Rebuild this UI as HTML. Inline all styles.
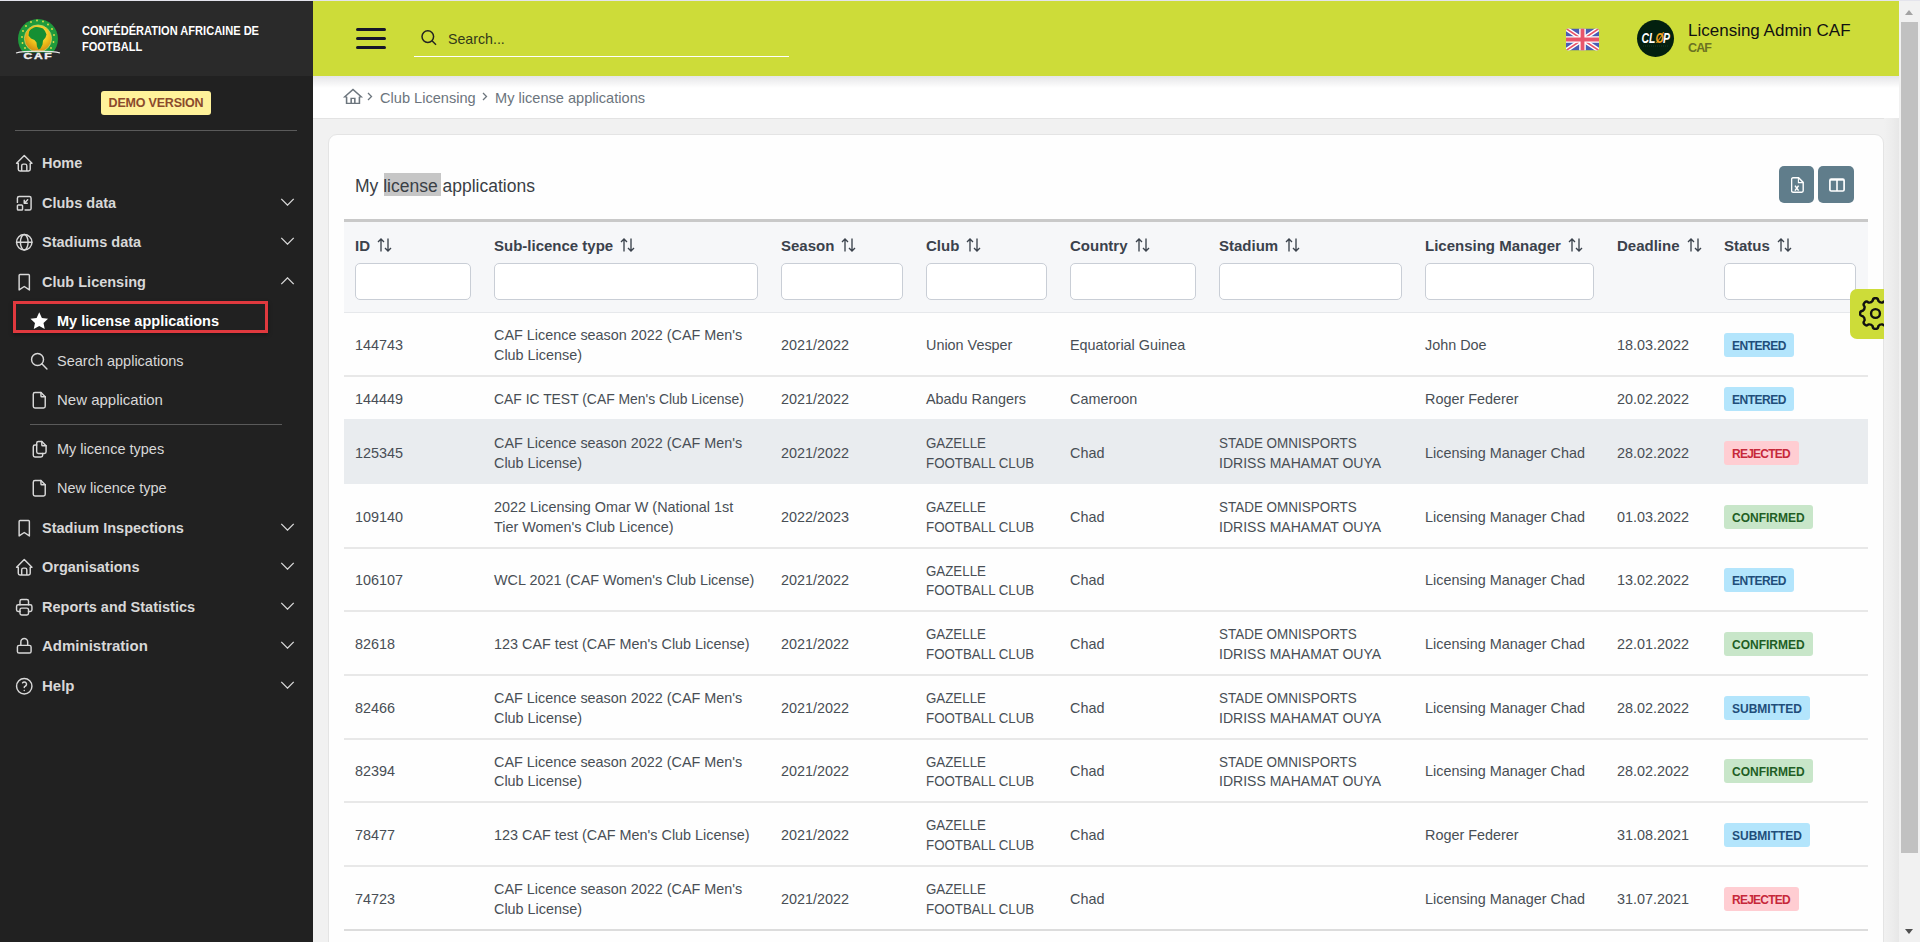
<!DOCTYPE html>
<html><head><meta charset="utf-8">
<style>
*{box-sizing:border-box;margin:0;padding:0}
html,body{width:1920px;height:942px;overflow:hidden;font-family:"Liberation Sans",sans-serif;background:#f1f1f1}
#topline{position:absolute;left:0;top:0;width:1920px;height:1px;background:#e4e4ec}
#side{position:absolute;left:0;top:1px;width:313px;height:941px;background:#212121;color:#d6d6d6}
#side .brand{position:absolute;left:0;top:0;width:313px;height:75px;background:#2a2a2a}
#hdr{position:absolute;left:313px;top:1px;width:1586px;height:75px;background:#cddc39}
#scroll{position:absolute;left:1899px;top:1px;width:21px;height:941px;background:#f1f1f1}
#crumb{position:absolute;left:313px;top:76px;width:1586px;height:43px;background:#fff;border-bottom:1px solid #e3e3e3}
#card{position:absolute;left:328px;top:134px;width:1556px;height:900px;background:#fefefe;border:1px solid #e4e4e4;border-radius:9px}
#side .org{position:absolute;left:82px;top:22px;font-size:12.5px;line-height:16px;font-weight:700;color:#fff;transform:scaleX(0.885);transform-origin:0 0;white-space:nowrap}
#side .demo{position:absolute;left:101px;top:90px;width:110px;height:24px;background:#fff29a;border-radius:3px;color:#8b4a2c;font-size:12.5px;line-height:24px;font-weight:700;text-align:center;letter-spacing:-0.2px}
#side .sep{position:absolute;height:1px;background:#5a5a5a}
#side .mi,#side .si{position:absolute;left:0;width:313px;height:24px;line-height:24px;font-size:14.5px;color:#d8d8d8;white-space:nowrap}
#side .mi{padding-left:42px}
#side .si{padding-left:57px;font-size:14.5px}
#side .b{font-weight:700}
#side .w{color:#fff}
#side .ic{position:absolute;width:20.5px;height:20.5px;top:2px;fill:none;stroke:#d8d8d8;stroke-width:1.7;stroke-linecap:round;stroke-linejoin:round}
#side .mi .ic{left:13.5px}
#side .si .ic{left:28.5px}
#side .chev{position:absolute;left:280px;top:7px;width:15px;height:8px;fill:none;stroke:#d8d8d8;stroke-width:1.5}
#side .redbox{position:absolute;left:13px;top:300px;box-shadow:0 2px 4px rgba(0,0,0,0.35);width:255px;height:32px;border:3px solid #e0393e}
#hdr .hb{position:absolute;left:43px;width:30px;height:3px;border-radius:2px;background:#16162a}
#hdr .sic{position:absolute;left:108px;top:29px;width:16px;height:16px;fill:none;stroke:#222;stroke-width:1.5}
#hdr .stxt{position:absolute;left:135px;top:29px;font-size:14.2px;line-height:18px;color:#333a1a}
#hdr .sline{position:absolute;left:101px;top:55px;width:375px;height:1px;background:#fff}
#hdr .flag{position:absolute;left:1253px;top:27px;width:33px;height:23px}
#hdr .avatar{position:absolute;left:1324px;top:19px;width:37px;height:37px;border-radius:50%;background:#03200f;overflow:hidden}
#hdr .uname{position:absolute;left:1375px;top:20px;font-size:17px;line-height:20px;color:#111;white-space:nowrap}
#hdr .uorg{position:absolute;left:1375px;top:40px;font-size:12.5px;line-height:15px;font-weight:700;color:#6b7222;letter-spacing:-0.9px}
#hshadow{position:absolute;left:313px;top:76px;width:1586px;height:12px;background:linear-gradient(rgba(20,20,40,0.11),rgba(0,0,0,0))}
#crumb .chome{position:absolute;left:28.5px;top:11px;width:22px;height:19.6px;fill:none;stroke:#6c757d;stroke-width:1.7}
#crumb .cchev{position:absolute;top:16px;width:6px;height:9px;fill:none;stroke:#6c757d;stroke-width:1.3}
#crumb .ct{position:absolute;top:12.5px;font-size:14.6px;line-height:18px;color:#6c757d;white-space:nowrap}
#card .title{position:absolute;left:26px;top:39px;font-size:17.5px;line-height:24px;color:#3a3f45;white-space:nowrap}
#card .hlbox{position:absolute;left:55px;top:38px;width:57px;height:23px;background:#c6c6c6}
#card .btn{position:absolute;top:31px;height:37px;border-radius:5px;background:#607d8b;text-align:center}
#card .btn svg{display:inline-block}
#tbl{position:absolute;left:0;top:0;width:1920px;height:942px;pointer-events:none}
#tbl .ttop{position:absolute;left:344px;top:219px;width:1524px;height:3px;background:#c9c9c9}
#tbl .thead{position:absolute;left:344px;top:222px;width:1524px;height:91px;background:#f6f7f9;border-bottom:1px solid #e6e8eb}
#tbl .th{position:absolute;top:236px;font-size:15px;line-height:19px;font-weight:700;color:#3b424c;white-space:nowrap}
#tbl .srt{display:inline-block;vertical-align:top;margin-left:7px;margin-top:1px;width:15px;height:16px;fill:none;stroke:#3b424c;stroke-width:1.35}
#tbl .inp{position:absolute;top:263px;height:37px;background:#fff;border:1px solid #c9ced6;border-radius:5px}
#tbl .hov{position:absolute;left:344px;width:1524px;background:#e9ecef}
#tbl .rb{position:absolute;left:344px;width:1524px;height:2px;background:#e8e8e8}
#tbl .td{position:absolute;font-size:14.4px;line-height:19.5px;color:#484e55;white-space:nowrap}
#tbl .td.up{transform:scaleX(0.925);transform-origin:0 0}
#tbl .s1{transform:scaleX(0.935);transform-origin:0 0}
#tbl .s2{transform:scaleX(0.975);transform-origin:0 0}
#tbl .badge{position:absolute;height:24px;line-height:23px;padding:2.3px 8px 0 8px;border-radius:3px;font-size:12px;font-weight:700}
#tbl .be,#tbl .bs{background:#b3e5fc;color:#1f4e7a}
#tbl .be{letter-spacing:-0.5px;padding-right:8.5px}
#tbl .br{letter-spacing:-0.75px;padding-right:8.75px}
#tbl .bc{background:#c8e6c9;color:#1f5e25}
#tbl .br{background:#ffcdd2;color:#c6283a}
#gear{position:absolute;left:1850px;top:289px;width:49px;height:50px;background:#cddc39;border-radius:7px 0 0 7px;padding:8px 0 0 9px}
#scroll .thumb{position:absolute;left:2px;top:21px;width:17px;height:831px;background:#c1c1c1}
#scroll .up{position:absolute;left:6px;top:9px;width:0;height:0;border-left:4.5px solid transparent;border-right:4.5px solid transparent;border-bottom:5px solid #a3a3a3}
#scroll .dn{position:absolute;left:6px;top:928px;width:0;height:0;border-left:4.5px solid transparent;border-right:4.5px solid transparent;border-top:5px solid #505050}
#rgrad{position:absolute;left:1884px;top:118px;width:15px;height:824px;background:linear-gradient(90deg,#f1f1f1,#ececec 60%,#e7e7e7)}
#tbl .s3{transform:scaleX(0.965);transform-origin:0 0}
</style></head><body>
<div id="topline"></div>
<div id="side">
 <div class="brand">
  <svg style="position:absolute;left:14px;top:14px" width="48" height="48" viewBox="0 0 48 48">
   <defs><radialGradient id="gg" cx="55%" cy="35%" r="65%"><stop offset="0" stop-color="#fff36a"/><stop offset="0.55" stop-color="#f0c21c"/><stop offset="1" stop-color="#d08a10"/></radialGradient>
   <clipPath id="lc"><rect x="0" y="0" width="48" height="37.5"/></clipPath></defs>
   <g clip-path="url(#lc)">
   <circle cx="24" cy="24" r="20" fill="#1f9a3c"/>
   <circle cx="24" cy="23.5" r="13.6" fill="url(#gg)" stroke="#b8e07a" stroke-width="0.7"/>
   <path d="M15 17c1-3 5-5 8-5l3 .5 3 1 2 2.5 1.5 3.5-1 3-2.5 3-.5 4-2 4-2 1-1.5-3-.5-4-2-2.5-3.5-1.5-2.5-3z" fill="#158f33"/>
   <g fill="#e8e04a"><circle cx="8" cy="22" r="0.9"/><circle cx="9" cy="16" r="0.9"/><circle cx="12" cy="11" r="0.9"/><circle cx="17" cy="7" r="0.9"/><circle cx="23" cy="5.5" r="0.9"/><circle cx="29" cy="6.5" r="0.9"/><circle cx="34" cy="9.5" r="0.9"/><circle cx="38" cy="14" r="0.9"/><circle cx="40" cy="20" r="0.9"/><circle cx="39.5" cy="27" r="0.9"/><circle cx="8.5" cy="28" r="0.9"/><circle cx="11" cy="33" r="0.9"/><circle cx="37" cy="33" r="0.9"/></g>
   </g>
   <path d="M2 38c8-2.5 36-2.5 44 0" stroke="#e8e8e8" stroke-width="1.2" fill="none"/>
   <text x="24.5" y="45.5" text-anchor="middle" font-family="Liberation Sans" font-weight="700" font-size="9" fill="#f0f0f0" letter-spacing="1.6" transform="translate(-24.5 0) scale(2 1) translate(0 0)" style="display:none">CAF</text>
   <g transform="translate(24.5 44.2) scale(1.35 1)"><text x="0" y="0" text-anchor="middle" font-family="Liberation Sans" font-weight="900" font-size="9" fill="#f0f0f0" letter-spacing="1.2" stroke="#f0f0f0" stroke-width="0.4">CAF</text></g>
  </svg>
  <div class="org">CONFÉDÉRATION AFRICAINE DE<br>FOOTBALL</div>
 </div>
 <div class="demo">DEMO VERSION</div>
 <div class="sep" style="left:15px;top:129px;width:282px"></div>
 <div class="mi b" style="top:150px"><svg class="ic" viewBox="0 0 24 24"><path d="M5 12H3l9-9 9 9h-2M5 12v7a2 2 0 0 0 2 2h10a2 2 0 0 0 2-2v-7M9 21v-6a2 2 0 0 1 2-2h2a2 2 0 0 1 2 2v6"/></svg>Home</div>
 <div class="mi b" style="top:190px"><svg class="ic" viewBox="0 0 24 24"><path d="M4 11V6a2 2 0 0 1 2-2h12a2 2 0 0 1 2 2v12a2 2 0 0 1-2 2h-5"/><rect x="4" y="14" width="6" height="6" rx="1"/><path d="M16 8l-4 4M12 8.5V12h3.5"/></svg>Clubs data<svg class="chev" viewBox="0 0 16 9"><path d="M1 1l7 7 7-7"/></svg></div>
 <div class="mi b" style="top:229px"><svg class="ic" viewBox="0 0 24 24"><circle cx="12" cy="12" r="9"/><path d="M3 12h18M12 3a4.5 9 0 0 0 0 18a4.5 9 0 0 0 0-18"/></svg>Stadiums data<svg class="chev" viewBox="0 0 16 9"><path d="M1 1l7 7 7-7"/></svg></div>
 <div class="mi b" style="top:269px"><svg class="ic" viewBox="0 0 24 24"><path d="M18 4v17l-6-4-6 4V4a1 1 0 0 1 1-1h10a1 1 0 0 1 1 1z"/></svg>Club Licensing<svg class="chev" viewBox="0 0 16 9"><path d="M1 8l7-7 7 7"/></svg></div>
 <div class="redbox"></div>
 <div class="si b w" style="top:308px"><svg class="ic" viewBox="0 0 24 24"><path fill="#fff" stroke="none" d="M12 1.5l3.1 6.6 7.2.9-5.3 5 1.4 7.1L12 17.6l-6.4 3.5 1.4-7.1-5.3-5 7.2-.9z"/></svg>My license applications</div>
 <div class="si" style="top:348px"><svg class="ic" viewBox="0 0 24 24"><circle cx="10" cy="10" r="7"/><path d="M21 21l-6-6"/></svg>Search applications</div>
 <div class="si" style="top:387px"><svg class="ic" viewBox="0 0 24 24"><path d="M14 3v4a1 1 0 0 0 1 1h4"/><path d="M17 21H7a2 2 0 0 1-2-2V5a2 2 0 0 1 2-2h7l5 5v11a2 2 0 0 1-2 2z"/></svg><span style="font-size:15px">New application</span></div>
 <div class="sep" style="left:30px;top:423px;width:252px"></div>
 <div class="si" style="top:436px"><svg class="ic" viewBox="0 0 24 24"><path d="M15 3v4a1 1 0 0 0 1 1h4"/><path d="M18 17h-7a2 2 0 0 1-2-2V5a2 2 0 0 1 2-2h4l5 5v7a2 2 0 0 1-2 2z"/><path d="M16 17v2a2 2 0 0 1-2 2H7a2 2 0 0 1-2-2V9a2 2 0 0 1 2-2h2"/></svg>My licence types</div>
 <div class="si" style="top:475px"><svg class="ic" viewBox="0 0 24 24"><path d="M14 3v4a1 1 0 0 0 1 1h4"/><path d="M17 21H7a2 2 0 0 1-2-2V5a2 2 0 0 1 2-2h7l5 5v11a2 2 0 0 1-2 2z"/></svg>New licence type</div>
 <div class="mi b" style="top:515px"><svg class="ic" viewBox="0 0 24 24"><path d="M18 4v17l-6-4-6 4V4a1 1 0 0 1 1-1h10a1 1 0 0 1 1 1z"/></svg>Stadium Inspections<svg class="chev" viewBox="0 0 16 9"><path d="M1 1l7 7 7-7"/></svg></div>
 <div class="mi b" style="top:554px"><svg class="ic" viewBox="0 0 24 24"><path d="M5 12H3l9-9 9 9h-2M5 12v7a2 2 0 0 0 2 2h10a2 2 0 0 0 2-2v-7M9 21v-6a2 2 0 0 1 2-2h2a2 2 0 0 1 2 2v6"/></svg>Organisations<svg class="chev" viewBox="0 0 16 9"><path d="M1 1l7 7 7-7"/></svg></div>
 <div class="mi b" style="top:594px"><svg class="ic" viewBox="0 0 24 24"><path d="M17 17h2a2 2 0 0 0 2-2v-4a2 2 0 0 0-2-2H5a2 2 0 0 0-2 2v4a2 2 0 0 0 2 2h2"/><path d="M17 9V5a2 2 0 0 0-2-2H9a2 2 0 0 0-2 2v4"/><rect x="7" y="13" width="10" height="8" rx="2"/></svg>Reports and Statistics<svg class="chev" viewBox="0 0 16 9"><path d="M1 1l7 7 7-7"/></svg></div>
 <div class="mi b" style="top:633px"><svg class="ic" viewBox="0 0 24 24"><rect x="4" y="11" width="16" height="9" rx="2"/><path d="M8 11V7a4 4 0 0 1 8 0v4"/></svg><span style="font-size:15px">Administration</span><svg class="chev" viewBox="0 0 16 9"><path d="M1 1l7 7 7-7"/></svg></div>
 <div class="mi b" style="top:673px"><svg class="ic" viewBox="0 0 24 24"><circle cx="12" cy="12" r="9"/><path d="M12 17v.01M12 13.5a1.5 1.5 0 0 1 1-1.5 2.6 2.6 0 1 0-3-4"/></svg><span style="font-size:15px">Help</span><svg class="chev" viewBox="0 0 16 9"><path d="M1 1l7 7 7-7"/></svg></div>
</div>

<div id="hdr">
 <div class="hb" style="top:27px"></div><div class="hb" style="top:36px"></div><div class="hb" style="top:44.5px"></div>
 <svg class="sic" viewBox="0 0 16 16"><circle cx="6.8" cy="6.6" r="5.8"/><path d="M11 10.8l4 4"/></svg>
 <div class="stxt">Search...</div>
 <div class="sline"></div>
 <svg class="flag" viewBox="0 0 60 40">
  <defs><clipPath id="fc"><rect width="60" height="40" rx="4"/></clipPath></defs>
  <g clip-path="url(#fc)">
  <rect width="60" height="40" fill="#4a5cb5"/>
  <path d="M0 0L60 40M60 0L0 40" stroke="#fff" stroke-width="8"/>
  <path d="M0 0L60 40M60 0L0 40" stroke="#e8556b" stroke-width="3"/>
  <path d="M30 0v40M0 20h60" stroke="#fff" stroke-width="12"/>
  <path d="M30 0v40M0 20h60" stroke="#e8556b" stroke-width="7"/>
  </g>
 </svg>
 <div class="avatar"><svg width="37" height="37" viewBox="0 0 37 37">
  <g transform="translate(4.5 23) scale(0.72 1)" font-family="Liberation Sans" font-style="italic" font-weight="700" font-size="14.5">
  <text x="0" y="0" fill="#fff">C</text><text x="10.5" y="0" fill="#fff">L</text><text x="19.5" y="0" fill="#f0a020">Ø</text><text x="30" y="0" fill="#fff">P</text>
  </g>
  <path d="M6 26h25" stroke="#8a9" stroke-width="0.4" stroke-dasharray="0.8 1.2" opacity="0.6"/>
 </svg></div>
 <div class="uname">Licensing Admin CAF</div>
 <div class="uorg">CAF</div>
</div>
<div id="crumb">
 <svg class="chome" viewBox="0 0 24 24" preserveAspectRatio="none"><path d="M5 12H3l9-9 9 9h-2M5 12v8h14v-8M10 20v-6h4v6"/></svg>
 <svg class="cchev" style="left:54px" viewBox="0 0 6 9"><path d="M1 1l3.5 3.5L1 8"/></svg>
 <span class="ct" style="left:67px">Club Licensing</span>
 <svg class="cchev" style="left:169px" viewBox="0 0 6 9"><path d="M1 1l3.5 3.5L1 8"/></svg>
 <span class="ct" style="left:182px">My license applications</span>
</div>
<div id="hshadow"></div>
<div id="card">
 <div class="hlbox"></div>
 <div class="title">My license applications</div>
 <div class="btn" style="left:1450px;width:35px"><svg viewBox="0 0 13 16" width="13" height="16" style="position:absolute;left:12px;top:11px"><path d="M2 .8h5.6l4.6 4.6v8.4a1.4 1.4 0 0 1-1.4 1.4H2a1.4 1.4 0 0 1-1.4-1.4V2.2A1.4 1.4 0 0 1 2 .8z" fill="none" stroke="#fff" stroke-width="1.4"/><path d="M7.4 .8v4.8h4.8" fill="none" stroke="#fff" stroke-width="1.1"/><path d="M4 8.6l3.6 5M7.6 8.6L4 13.6" stroke="#fff" stroke-width="1.5"/></svg></div>
 <div class="btn" style="left:1489px;width:36px"><svg viewBox="0 0 16 14" width="16" height="14" style="position:absolute;left:10.5px;top:11.5px"><rect x="0.9" y="1.1" width="14.2" height="11.9" rx="1.3" fill="none" stroke="#fff" stroke-width="1.7"/><path d="M8 1v12" stroke="#fff" stroke-width="1.6"/><path d="M1 2.2h14" stroke="#fff" stroke-width="1"/></svg></div>
</div>

<div id="tbl">
<div class="ttop"></div><div class="thead"></div>
<div class="th" style="left:355px">ID<svg class="srt" viewBox="0 0 15 15"><path d="M4 14V1.5M1 4.5l3-3 3 3M11 1v12.5M8 10.5l3 3 3-3"/></svg></div>
<div class="inp" style="left:355px;width:116px"></div>
<div class="th" style="left:494px">Sub-licence type<svg class="srt" viewBox="0 0 15 15"><path d="M4 14V1.5M1 4.5l3-3 3 3M11 1v12.5M8 10.5l3 3 3-3"/></svg></div>
<div class="inp" style="left:494px;width:264px"></div>
<div class="th" style="left:781px">Season<svg class="srt" viewBox="0 0 15 15"><path d="M4 14V1.5M1 4.5l3-3 3 3M11 1v12.5M8 10.5l3 3 3-3"/></svg></div>
<div class="inp" style="left:781px;width:122px"></div>
<div class="th" style="left:926px">Club<svg class="srt" viewBox="0 0 15 15"><path d="M4 14V1.5M1 4.5l3-3 3 3M11 1v12.5M8 10.5l3 3 3-3"/></svg></div>
<div class="inp" style="left:926px;width:121px"></div>
<div class="th" style="left:1070px">Country<svg class="srt" viewBox="0 0 15 15"><path d="M4 14V1.5M1 4.5l3-3 3 3M11 1v12.5M8 10.5l3 3 3-3"/></svg></div>
<div class="inp" style="left:1070px;width:126px"></div>
<div class="th" style="left:1219px">Stadium<svg class="srt" viewBox="0 0 15 15"><path d="M4 14V1.5M1 4.5l3-3 3 3M11 1v12.5M8 10.5l3 3 3-3"/></svg></div>
<div class="inp" style="left:1219px;width:183px"></div>
<div class="th" style="left:1425px">Licensing Manager<svg class="srt" viewBox="0 0 15 15"><path d="M4 14V1.5M1 4.5l3-3 3 3M11 1v12.5M8 10.5l3 3 3-3"/></svg></div>
<div class="inp" style="left:1425px;width:169px"></div>
<div class="th" style="left:1617px">Deadline<svg class="srt" viewBox="0 0 15 15"><path d="M4 14V1.5M1 4.5l3-3 3 3M11 1v12.5M8 10.5l3 3 3-3"/></svg></div>
<div class="th" style="left:1724px">Status<svg class="srt" viewBox="0 0 15 15"><path d="M4 14V1.5M1 4.5l3-3 3 3M11 1v12.5M8 10.5l3 3 3-3"/></svg></div>
<div class="inp" style="left:1724px;width:132px"></div>
<div class="rb" style="top:375px"></div>
<div class="td" style="left:355px;top:335.9px">144743</div>
<div class="td" style="left:494px;top:326.1px">CAF Licence season 2022 (CAF Men's<br>Club License)</div>
<div class="td" style="left:781px;top:335.9px">2021/2022</div>
<div class="td" style="left:926px;top:335.9px">Union Vesper</div>
<div class="td" style="left:1070px;top:335.9px">Equatorial Guinea</div>
<div class="td" style="left:1425px;top:335.9px">John Doe</div>
<div class="td" style="left:1617px;top:335.9px">18.03.2022</div>
<div class="badge be" style="left:1724px;top:332.6px">ENTERED</div>
<div class="td" style="left:355px;top:389.9px">144449</div>
<div class="td" style="left:494px;top:389.9px"><div class=s3>CAF IC TEST (CAF Men's Club License)</div></div>
<div class="td" style="left:781px;top:389.9px">2021/2022</div>
<div class="td" style="left:926px;top:389.9px">Abadu Rangers</div>
<div class="td" style="left:1070px;top:389.9px">Cameroon</div>
<div class="td" style="left:1425px;top:389.9px">Roger Federer</div>
<div class="td" style="left:1617px;top:389.9px">20.02.2022</div>
<div class="badge be" style="left:1724px;top:386.6px">ENTERED</div>
<div class="hov" style="top:419px;height:65px"></div>
<div class="td" style="left:355px;top:443.9px">125345</div>
<div class="td" style="left:494px;top:434.1px">CAF Licence season 2022 (CAF Men's<br>Club License)</div>
<div class="td" style="left:781px;top:443.9px">2021/2022</div>
<div class="td up" style="left:926px;top:434.1px">GAZELLE<br>FOOTBALL CLUB</div>
<div class="td" style="left:1070px;top:443.9px">Chad</div>
<div class="td" style="left:1219px;top:434.1px"><div class=s1>STADE OMNISPORTS</div><div class=s2>IDRISS MAHAMAT OUYA</div></div>
<div class="td" style="left:1425px;top:443.9px">Licensing Manager Chad</div>
<div class="td" style="left:1617px;top:443.9px">28.02.2022</div>
<div class="badge br" style="left:1724px;top:440.6px">REJECTED</div>
<div class="rb" style="top:547px"></div>
<div class="td" style="left:355px;top:507.9px">109140</div>
<div class="td" style="left:494px;top:498.1px">2022 Licensing Omar W (National 1st<br>Tier Women's Club Licence)</div>
<div class="td" style="left:781px;top:507.9px">2022/2023</div>
<div class="td up" style="left:926px;top:498.1px">GAZELLE<br>FOOTBALL CLUB</div>
<div class="td" style="left:1070px;top:507.9px">Chad</div>
<div class="td" style="left:1219px;top:498.1px"><div class=s1>STADE OMNISPORTS</div><div class=s2>IDRISS MAHAMAT OUYA</div></div>
<div class="td" style="left:1425px;top:507.9px">Licensing Manager Chad</div>
<div class="td" style="left:1617px;top:507.9px">01.03.2022</div>
<div class="badge bc" style="left:1724px;top:504.6px">CONFIRMED</div>
<div class="rb" style="top:610px"></div>
<div class="td" style="left:355px;top:571.4px">106107</div>
<div class="td" style="left:494px;top:571.4px">WCL 2021 (CAF Women's Club License)</div>
<div class="td" style="left:781px;top:571.4px">2021/2022</div>
<div class="td up" style="left:926px;top:561.6px">GAZELLE<br>FOOTBALL CLUB</div>
<div class="td" style="left:1070px;top:571.4px">Chad</div>
<div class="td" style="left:1425px;top:571.4px">Licensing Manager Chad</div>
<div class="td" style="left:1617px;top:571.4px">13.02.2022</div>
<div class="badge be" style="left:1724px;top:568.1px">ENTERED</div>
<div class="rb" style="top:674px"></div>
<div class="td" style="left:355px;top:634.9px">82618</div>
<div class="td" style="left:494px;top:634.9px">123 CAF test (CAF Men's Club License)</div>
<div class="td" style="left:781px;top:634.9px">2021/2022</div>
<div class="td up" style="left:926px;top:625.1px">GAZELLE<br>FOOTBALL CLUB</div>
<div class="td" style="left:1070px;top:634.9px">Chad</div>
<div class="td" style="left:1219px;top:625.1px"><div class=s1>STADE OMNISPORTS</div><div class=s2>IDRISS MAHAMAT OUYA</div></div>
<div class="td" style="left:1425px;top:634.9px">Licensing Manager Chad</div>
<div class="td" style="left:1617px;top:634.9px">22.01.2022</div>
<div class="badge bc" style="left:1724px;top:631.6px">CONFIRMED</div>
<div class="rb" style="top:738px"></div>
<div class="td" style="left:355px;top:698.9px">82466</div>
<div class="td" style="left:494px;top:689.1px">CAF Licence season 2022 (CAF Men's<br>Club License)</div>
<div class="td" style="left:781px;top:698.9px">2021/2022</div>
<div class="td up" style="left:926px;top:689.1px">GAZELLE<br>FOOTBALL CLUB</div>
<div class="td" style="left:1070px;top:698.9px">Chad</div>
<div class="td" style="left:1219px;top:689.1px"><div class=s1>STADE OMNISPORTS</div><div class=s2>IDRISS MAHAMAT OUYA</div></div>
<div class="td" style="left:1425px;top:698.9px">Licensing Manager Chad</div>
<div class="td" style="left:1617px;top:698.9px">28.02.2022</div>
<div class="badge bs" style="left:1724px;top:695.6px">SUBMITTED</div>
<div class="rb" style="top:801px"></div>
<div class="td" style="left:355px;top:762.4px">82394</div>
<div class="td" style="left:494px;top:752.6px">CAF Licence season 2022 (CAF Men's<br>Club License)</div>
<div class="td" style="left:781px;top:762.4px">2021/2022</div>
<div class="td up" style="left:926px;top:752.6px">GAZELLE<br>FOOTBALL CLUB</div>
<div class="td" style="left:1070px;top:762.4px">Chad</div>
<div class="td" style="left:1219px;top:752.6px"><div class=s1>STADE OMNISPORTS</div><div class=s2>IDRISS MAHAMAT OUYA</div></div>
<div class="td" style="left:1425px;top:762.4px">Licensing Manager Chad</div>
<div class="td" style="left:1617px;top:762.4px">28.02.2022</div>
<div class="badge bc" style="left:1724px;top:759.1px">CONFIRMED</div>
<div class="rb" style="top:865px"></div>
<div class="td" style="left:355px;top:825.9px">78477</div>
<div class="td" style="left:494px;top:825.9px">123 CAF test (CAF Men's Club License)</div>
<div class="td" style="left:781px;top:825.9px">2021/2022</div>
<div class="td up" style="left:926px;top:816.1px">GAZELLE<br>FOOTBALL CLUB</div>
<div class="td" style="left:1070px;top:825.9px">Chad</div>
<div class="td" style="left:1425px;top:825.9px">Roger Federer</div>
<div class="td" style="left:1617px;top:825.9px">31.08.2021</div>
<div class="badge bs" style="left:1724px;top:822.6px">SUBMITTED</div>
<div class="rb" style="top:929px"></div>
<div class="td" style="left:355px;top:889.9px">74723</div>
<div class="td" style="left:494px;top:880.1px">CAF Licence season 2022 (CAF Men's<br>Club License)</div>
<div class="td" style="left:781px;top:889.9px">2021/2022</div>
<div class="td up" style="left:926px;top:880.1px">GAZELLE<br>FOOTBALL CLUB</div>
<div class="td" style="left:1070px;top:889.9px">Chad</div>
<div class="td" style="left:1425px;top:889.9px">Licensing Manager Chad</div>
<div class="td" style="left:1617px;top:889.9px">31.07.2021</div>
<div class="badge br" style="left:1724px;top:886.6px">REJECTED</div>
<div class="rb" style="top:929px;height:2px;background:#dcdcdc"></div>
</div>
<div id="gear"><svg viewBox="0 0 32 32" width="33" height="33"><path d="M13.30 3.70 A2.7 2.7 0 0 1 18.70 3.70 A4.2 4.2 0 0 0 22.79 5.39 A2.7 2.7 0 0 1 26.61 9.21 A4.2 4.2 0 0 0 28.30 13.30 A2.7 2.7 0 0 1 28.30 18.70 A4.2 4.2 0 0 0 26.61 22.79 A2.7 2.7 0 0 1 22.79 26.61 A4.2 4.2 0 0 0 18.70 28.30 A2.7 2.7 0 0 1 13.30 28.30 A4.2 4.2 0 0 0 9.21 26.61 A2.7 2.7 0 0 1 5.39 22.79 A4.2 4.2 0 0 0 3.70 18.70 A2.7 2.7 0 0 1 3.70 13.30 A4.2 4.2 0 0 0 5.39 9.21 A2.7 2.7 0 0 1 9.21 5.39 A4.2 4.2 0 0 0 13.30 3.70Z" fill="none" stroke="#111" stroke-width="2.3" stroke-linejoin="round"/><circle cx="16" cy="16" r="4.3" fill="none" stroke="#111" stroke-width="2.3"/></svg></div>
<div id="rgrad"></div>
<div id="scroll"><div class="up"></div><div class="thumb"></div><div class="dn"></div></div>
</body></html>
